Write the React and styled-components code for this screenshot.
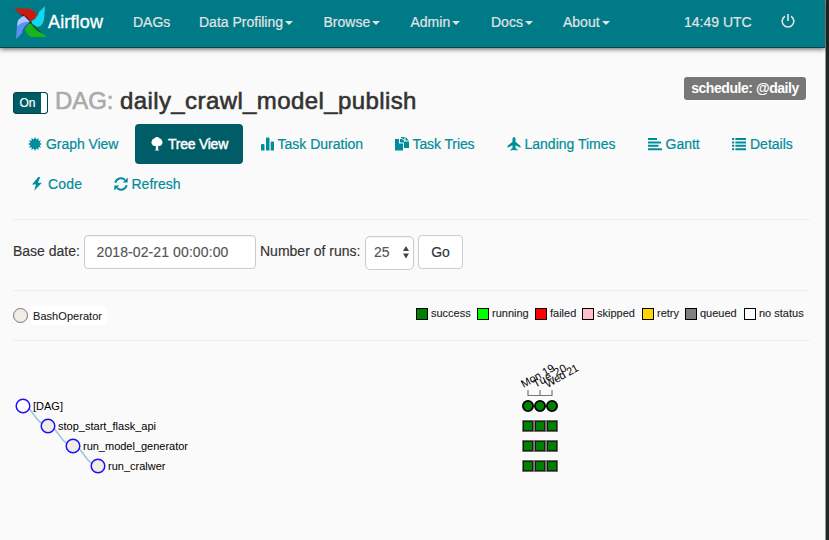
import React from 'react';
import styled, { createGlobalStyle } from 'styled-components';

const GlobalStyle = createGlobalStyle`
  * { box-sizing: border-box; }
  html, body { margin: 0; height: 540px; overflow: hidden; background: #222626; }
  body { font-family: "Liberation Sans", Arial, sans-serif; font-size: 14px; line-height: 20px; color: #333; }
`;

const Page = styled.div`
  width: 826px;
  height: 540px;
  background: #fafafa;
  border-right: 1px solid #9a9c9c;
`;

const NavBar = styled.nav`
  display: flex;
  align-items: flex-start;
  height: 48px;
  padding-left: 13px;
  background: #007a87;
  border-bottom: 1px solid #07454c;
  box-shadow: 0 1px 5px rgba(0, 0, 0, 0.65);
`;

const Brand = styled.div`
  display: flex;
  width: 120px;
  padding-top: 5px;
  color: #fff;
  font-size: 18px;
  line-height: 34px;
  letter-spacing: 0.15px;
  -webkit-text-stroke: 0.35px #fff;
`;

const NavItem = styled.div`
  display: flex;
  align-items: center;
  width: ${(p) => p.$width}px;
  padding-top: ${(p) => p.$top ?? 12}px;
  color: #e1e4e5;
  -webkit-text-stroke: 0.2px #e1e4e5;
  white-space: nowrap;
`;

const Caret = styled.span`
  margin: 2px 0 0 2px;
  border: 4px solid transparent;
  border-top-color: #e1e4e5;
  border-bottom: 0;
`;

const Main = styled.main`
  padding: 29px 15px 0 13px;
`;

const TitleRow = styled.header`
  display: flex;
  align-items: flex-start;
  height: 47px;
`;

const Toggle = styled.div`
  display: flex;
  width: 35px;
  height: 22px;
  margin-top: 15px;
  border: 1px solid #00444b;
  border-radius: 3px;
  background: #005c66;
  overflow: hidden;
`;

const ToggleLabel = styled.span`
  width: 27px;
  color: #fff;
  font-size: 12px;
  line-height: 20px;
  text-align: center;
  -webkit-text-stroke: 0.2px #fff;
`;

const ToggleKnob = styled.span`
  width: 6px;
  background: #fff;
  border-radius: 0 2px 2px 0;
`;

const Title = styled.h3`
  flex: 1;
  margin: 10px 0 0 7px;
  color: #333;
  font-size: 24px;
  font-weight: 400;
  line-height: 28px;
  letter-spacing: 0.4px;
  -webkit-text-stroke: 0.6px currentColor;
`;

const Muted = styled.span`
  display: inline-block;
  width: 65px;
  color: #aaa;
  letter-spacing: -0.1px;
`;

const Badge = styled.div`
  width: 122px;
  height: 23px;
  margin-right: 4px;
  border-radius: 3px;
  background: #777;
  color: #fff;
  font-size: 14px;
  font-weight: 700;
  line-height: 23px;
  letter-spacing: -0.45px;
  text-align: center;
`;

const Tabs = styled.div`
  display: flex;
  flex-wrap: wrap;
  height: 80px;
`;

const Tab = styled.div`
  display: flex;
  align-items: center;
  width: ${(p) => p.$width}px;
  height: 40px;
  padding-left: ${(p) => p.$pad ?? 15}px;
  gap: ${(p) => p.$gap ?? 4}px;
  border-radius: 4px;
  background: ${(p) => (p.$active ? '#005c66' : 'transparent')};
  color: ${(p) => (p.$active ? '#fff' : '#008c99')};
  letter-spacing: ${(p) => p.$spacing || 0}px;
  -webkit-text-stroke: ${(p) => (p.$active ? 0.45 : 0.2)}px currentColor;
  white-space: nowrap;
`;

const Glyph = styled.svg`
  width: 14px;
  height: 14px;
  flex: none;
  fill: currentColor;
  stroke: none;
`;

const Rule = styled.hr`
  height: 1px;
  margin: ${(p) => p.$top}px 0 0;
  border: 0;
  background: #eee;
`;

const Form = styled.div`
  display: flex;
  align-items: flex-start;
  height: 55px;
  margin-top: 15px;
`;

const FieldLabel = styled.label`
  width: ${(p) => p.$width}px;
  padding-top: 6px;
  white-space: nowrap;
  -webkit-text-stroke: 0.15px currentColor;
`;

const Control = styled.div`
  display: flex;
  align-items: center;
  justify-content: ${(p) => (p.$center ? 'center' : 'space-between')};
  width: ${(p) => p.$width}px;
  height: 34px;
  margin: ${(p) => p.$top || 0}px 4px 0 0;
  padding: ${(p) => p.$padding || '0'};
  border: 1px solid #ccc;
  border-radius: ${(p) => p.$radius || 4}px;
  background: #fff;
  color: ${(p) => (p.$center ? '#333' : '#555')};
  letter-spacing: ${(p) => p.$spacing || 0}px;
  -webkit-text-stroke: 0.15px currentColor;
  box-shadow: ${(p) => (p.$center ? 'none' : 'inset 0 1px 1px rgba(0,0,0,.05)')};
`;

const LegendRow = styled.div`
  display: flex;
  height: 49px;
  padding-top: 16px;
  font-size: 11px;
  line-height: 12px;
  color: #222;
  -webkit-text-stroke: 0.1px currentColor;
`;

const OperatorDot = styled.span`
  width: 15px;
  height: 15px;
  margin-top: 1px;
  border: 1px solid #777;
  border-radius: 50%;
  background: #f0ede4;
`;

const OperatorName = styled.span`
  width: 77px;
  height: 19px;
  margin: -1px 309px 0 2px;
  padding: 4px 0 0 3px;
  border-radius: 4px;
  background: #fff;
  letter-spacing: 0.05px;
`;

const StateItem = styled.span`
  display: flex;
  width: ${(p) => p.$width}px;
  gap: 3px;
  white-space: nowrap;
`;

const Swatch = styled.span`
  flex: none;
  width: 12px;
  height: 12px;
  margin-top: 1px;
  border: 1px solid #000;
  background: ${(p) => p.$color};
`;

const Tree = styled.svg`
  display: block;
  width: 798px;
  height: 190px;
  margin-top: 9px;
  font-size: 11px;
  fill: #000;
`;

const spiky = Array.from({ length: 24 }, (_, i) => {
  const r = i % 2 ? 4.7 : 7;
  const a = (i * Math.PI) / 12;
  return `${(7 + r * Math.sin(a)).toFixed(2)},${(7 - r * Math.cos(a)).toFixed(2)}`;
}).join(' ');

const glyphs = {
  graph: <polygon points={spiky} />,
  tree: <path d="M7 0C8.3 0 9.3.7 9.7 1.6C11 1.7 12 2.7 12 4C12.8 4.5 12.7 6.1 12 6.9C11.4 8.6 9.7 9.2 8.2 8.8V12.4L9.4 13.5H4.6L5.8 12.4V8.8C4.3 9.2 2.6 8.6 2 6.9C1.2 6.1 1.2 4.5 2 4C2 2.7 3 1.7 4.3 1.6C4.7.7 5.7 0 7 0Z" />,
  bars: <path d="M0 8Q0 7 1 7H2.5Q3.5 7 3.5 8V13.5H0ZM5 1.5Q5 .5 6 .5H7.5Q8.5 .5 8.5 1.5V13.5H5ZM9.7 5.5Q9.7 4.5 10.7 4.5H12Q13 4.5 13 5.5V13.5H9.7Z" />,
  copy: <path d="M0 2H4V6.5H8V13.5H0ZM5 2H7.2L9 3.8V5.4H5ZM6 0H9.5V2.5H8.7L7.4 1.2H6ZM10.5 0L14 3.4H10.5ZM9 4.5H14V11H9Z" />,
  plane: <path d="M7 0C8 0 8.5 1.2 8.5 2.5V4.7L13.5 9V10.8L8.5 8.3V11L10.5 12.8V13.7L7.6 12.8L7 14L6.4 12.8L3.5 13.7V12.8L5.5 11V8.3L.5 10.8V9L5.5 4.7V2.5C5.5 1.2 6 0 7 0Z" />,
  gantt: <path d="M0 1H9V3H0ZM0 4.4H13V6.4H0ZM0 7.8H10.5V9.8H0ZM0 11.2H14.5V13.2H0Z" />,
  list: <path d="M0 1H2.2V3H0ZM3.4 1H14V3H3.4ZM0 4.4H2.2V6.4H0ZM3.4 4.4H14V6.4H3.4ZM0 7.8H2.2V9.8H0ZM3.4 7.8H14V9.8H3.4ZM0 11.2H2.2V13.2H0ZM3.4 11.2H14V13.2H3.4Z" />,
  bolt: <path d="M8.3 0L2 7.5H6L4.2 13.8L11.9 5.7H7.9L10.3 0Z" />,
  refresh: (
    <g>
      <path d="M1.3 5.7A5.8 5.8 0 0 1 11 3M12.7 8.3A5.8 5.8 0 0 1 3 11" fill="none" stroke="currentColor" strokeWidth="1.9" />
      <path d="M13.7.5V5.5H8.7ZM.3 13.5V8.5H5.3Z" />
    </g>
  ),
};

const tabs = [
  { label: 'Graph View', icon: 'graph', width: 122, spacing: -0.05 },
  { label: 'Tree View', icon: 'tree', width: 108, active: true, spacing: -0.25 },
  { label: 'Task Duration', icon: 'bars', width: 134, pad: 18, gap: 2.5 },
  { label: 'Task Tries', icon: 'copy', width: 111, pad: 18, gap: 3.5, spacing: -0.1 },
  { label: 'Landing Times', icon: 'plane', width: 142, pad: 19, gap: 3.5 },
  { label: 'Gantt', icon: 'gantt', width: 84, pad: 17.5, gap: 4 },
  { label: 'Details', icon: 'list', width: 90, pad: 18, gap: 4 },
  { label: 'Code', icon: 'bolt', width: 83, pad: 17, spacing: 0.15 },
  { label: 'Refresh', icon: 'refresh', width: 100, pad: 18, gap: 3.5 },
];

const navItems = [
  { label: 'DAGs', width: 66 },
  { label: 'Data Profiling', width: 124.5, caret: true },
  { label: 'Browse', width: 87, caret: true },
  { label: 'Admin', width: 80.5, caret: true },
  { label: 'Docs', width: 72, caret: true },
  { label: 'About', width: 121, caret: true },
  { label: '14:49 UTC', width: 97 },
];

const states = [
  { label: 'success', color: '#008000', width: 61 },
  { label: 'running', color: '#00ff00', width: 58 },
  { label: 'failed', color: '#ff0000', width: 47 },
  { label: 'skipped', color: '#ffc0cb', width: 60 },
  { label: 'retry', color: '#ffd700', width: 43 },
  { label: 'queued', color: '#808080', width: 59 },
  { label: 'no status', color: '#ffffff', width: 62 },
];

const tasks = [
  { name: '[DAG]', length: 30 },
  { name: 'stop_start_flask_api', length: 98 },
  { name: 'run_model_generator', length: 105 },
  { name: 'run_cralwer', length: 57.5 },
];
const days = ['Mon 19', 'Tue 20', 'Wed 21'];

const Logo = () => (
  <svg width="35" height="36" viewBox="0 0 35 36">
    <path d="M1 3L18 4Q24 7 24 12L19 18L16 15Q12 9 7 9Z" fill="#c91b12" />
    <path d="M7 9Q13 9 19 18L12 13Z" fill="#790c0a" />
    <path d="M32 1L31 15Q29 22 24 22L17 17Q24 13 26 7Z" fill="#13d7ef" />
    <path d="M26 7Q25 14 17 17L24 12Z" fill="#087783" />
    <path d="M34 32L18 32Q13 29 12 24L17 17L20 21Q24 27 29 28Z" fill="#16b51c" />
    <path d="M29 28Q22 26 17 17L23 22Z" fill="#076522" />
    <path d="M3 34L4 21Q5 14 11 11L17 17Q11 22 9 28Z" fill="#5893f3" />
    <path d="M4 21Q4 13 11 11L17 17Q11 16 4 21Z" fill="#a9c9ff" />
    <path d="M9 28Q10 21 17 17L11 25Z" fill="#265da6" />
    <circle cx="17.5" cy="17.5" r="1.5" fill="#28434c" />
  </svg>
);

const TaskTree = () => (
  <Tree viewBox="13 350 798 190">
    {[0, 1, 2].map((i) => (
      <path key={i} d={`M${28 + i * 25} ${408 + i * 20}C${33 + i * 25} ${411 + i * 20} ${36 + i * 25} ${421 + i * 20} ${43 + i * 25} ${424 + i * 20}`} fill="none" stroke="#9ec5e1" strokeWidth="1.5" />
    ))}
    {tasks.map((task, i) => (
      <g key={task.name}>
        <circle cx={23 + i * 25} cy={406 + i * 20} r="6.8" fill={i ? '#f0ede4' : '#fff'} stroke="#1a10ff" strokeWidth="1.5" />
        <text x={33 + i * 25} y={409.5 + i * 20} textLength={task.length}>{task.name}</text>
      </g>
    ))}
    <path d="M528 390V395.5H552V390M540 390V395.5" fill="none" stroke="#777" strokeWidth="1.2" />
    {days.map((day, i) => (
      <g key={day}>
        <text transform={`translate(${523.5 + i * 12} 388) rotate(-29)`} textLength="36.5">{day}</text>
        <circle cx={528 + i * 12} cy="406" r="5.1" fill="#008000" stroke="#000" strokeWidth="1.8" />
      </g>
    ))}
    {[426, 446, 466].map((y) => (
      <g key={y}>
        <rect x="522" y={y - 6} width="36" height="12" fill="#808080" />
        {days.map((day, i) => (
          <rect key={day} x={523.5 + i * 12} y={y - 4.7} width="9.2" height="9.4" fill="#008000" stroke="#111" />
        ))}
      </g>
    ))}
  </Tree>
);

export default function App() {
  return (
    <>
      <GlobalStyle />
      <Page>
        <NavBar>
          <Brand><Logo />Airflow</Brand>
          {navItems.map((item) => (
            <NavItem key={item.label} $width={item.width}>{item.label}{item.caret && <Caret />}</NavItem>
          ))}
          <NavItem $width={14} $top={14}>
            <Glyph viewBox="0 0 14 14">
              <path d="M4 2.3A5.8 5.8 0 1 0 10 2.3M7 0V7" fill="none" stroke="currentColor" strokeWidth="1.6" />
            </Glyph>
          </NavItem>
        </NavBar>
        <Main>
          <TitleRow>
            <Toggle><ToggleLabel>On</ToggleLabel><ToggleKnob /></Toggle>
            <Title><Muted>DAG:</Muted>daily_crawl_model_publish</Title>
            <Badge>schedule: @daily</Badge>
          </TitleRow>
          <Tabs>
            {tabs.map((tab) => (
              <Tab key={tab.label} $width={tab.width} $pad={tab.pad} $gap={tab.gap} $active={tab.active} $spacing={tab.spacing}>
                <Glyph viewBox="0 0 14 14">{glyphs[tab.icon]}</Glyph>{tab.label}
              </Tab>
            ))}
          </Tabs>
          <Rule $top={15} />
          <Form>
            <FieldLabel $width={71}>Base date:</FieldLabel>
            <Control $width={172} $padding="0 11.5px" $spacing={0.1}>2018-02-21 00:00:00</Control>
            <FieldLabel $width={105}>Number of runs:</FieldLabel>
            <Control $width={49} $top={1} $padding="0 3px 2px 8px" $radius={5}>
              25
              <svg width="8" height="14"><path d="M1 6L4 1L7 6ZM1 8.5L4 13.5L7 8.5Z" fill="#444" /></svg>
            </Control>
            <Control $width={45} $center>Go</Control>
          </Form>
          <Rule $top={0} />
          <LegendRow>
            <OperatorDot />
            <OperatorName>BashOperator</OperatorName>
            {states.map((state) => (
              <StateItem key={state.label} $width={state.width}><Swatch $color={state.color} />{state.label}</StateItem>
            ))}
          </LegendRow>
          <Rule $top={0} />
          <TaskTree />
        </Main>
      </Page>
    </>
  );
}
